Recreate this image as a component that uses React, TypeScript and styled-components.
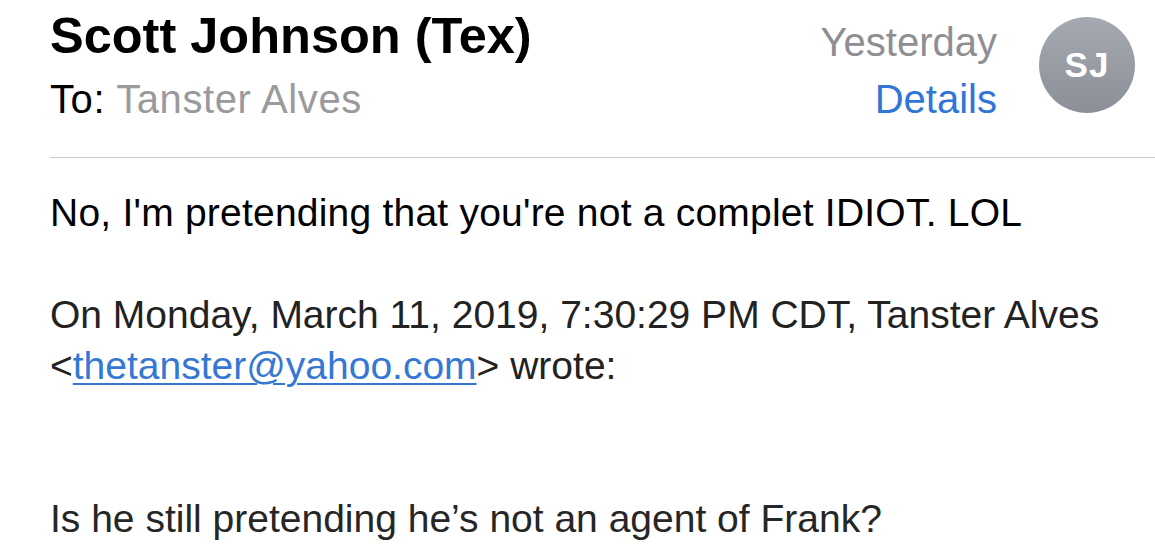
import React from "react";
import styled, { createGlobalStyle } from "styled-components";

const GlobalStyle = createGlobalStyle`
	html, body {
		margin: 0;
		padding: 0;
		background: #ffffff;
	}
	body {
		font-family: "Liberation Sans", Arial, sans-serif;
		-webkit-font-smoothing: antialiased;
	}
`;

const App = () => {
	return (
		<Page>
			<GlobalStyle />
			<Header>
				<Sender>
					<Name>Scott Johnson (Tex)</Name>
					<ToLine>
						To: <Recipient>Tanster Alves</Recipient>
					</ToLine>
				</Sender>
				<Meta>
					<DateLabel>Yesterday</DateLabel>
					<DetailsLink>Details</DetailsLink>
				</Meta>
				<Avatar>SJ</Avatar>
			</Header>
			<Divider />
			<Body>
				<Line tone="#000000" spacing={0.22}>
					No, I'm pretending that you're not a complet IDIOT. LOL
				</Line>
				<Blank />
				<Line tone="#222222">
					On Monday, March 11, 2019, 7:30:29 PM CDT, Tanster Alves
				</Line>
				<Line tone="#222222">
					&lt;<MailLink>thetanster@yahoo.com</MailLink>&gt; wrote:
				</Line>
				<Blank />
				<Blank />
				<Line tone="#262626">Is he still pretending he’s not an agent of Frank?</Line>
			</Body>
		</Page>
	);
};

export default App;

const Page = styled.div`
	width: 1155px;
	height: 557px;
	overflow: hidden;
	padding-left: 50px;
	box-sizing: border-box;
`;

const Header = styled.div`
	display: flex;
	align-items: flex-start;
	padding-top: 6px;
	padding-right: 20px;
`;

const Sender = styled.div`
	flex: 1;
	display: flex;
	flex-direction: column;
`;

const Name = styled.div`
	font-size: 50.5px;
	line-height: 60px;
	font-weight: 700;
	color: #000;
`;

const ToLine = styled.div`
	margin-top: 7px;
	font-size: 40px;
	line-height: 52px;
	letter-spacing: 0.6px;
	color: #000;
`;

const Recipient = styled.span`
	color: #9a9a9e;
`;

const Meta = styled.div`
	display: flex;
	flex-direction: column;
	align-items: flex-end;
	gap: 5px;
	margin-top: 10px;
	margin-right: 42px;
`;

const DateLabel = styled.div`
	font-size: 40px;
	line-height: 52px;
	color: #8e8e93;
`;

const DetailsLink = styled.div`
	font-size: 40px;
	line-height: 52px;
	color: #2f76d6;
`;

const Avatar = styled.div`
	width: 96px;
	height: 96px;
	margin-top: 11px;
	border-radius: 50%;
	background: linear-gradient(180deg, #a5a9b2 0%, #8b8f98 100%);
	color: #ffffff;
	display: flex;
	align-items: center;
	justify-content: center;
	font-size: 35px;
	font-weight: 700;
	letter-spacing: 1px;
`;

const Divider = styled.div`
	margin-top: 32px;
	height: 1px;
	background: #c8c7cc;
`;

const Body = styled.div`
	margin-top: 29px;
	font-size: 39px;
	line-height: 51px;
`;

const Line = styled.div<{ tone: string; spacing?: number }>`
	color: ${(p) => p.tone};
	letter-spacing: ${(p) => p.spacing ?? 0}px;
	white-space: nowrap;
`;

const Blank = styled.div`
	height: 51px;
`;

const MailLink = styled.span`
	color: #3478d4;
	text-decoration: underline;
	text-decoration-thickness: 2px;
	text-underline-offset: 4px;
`;
